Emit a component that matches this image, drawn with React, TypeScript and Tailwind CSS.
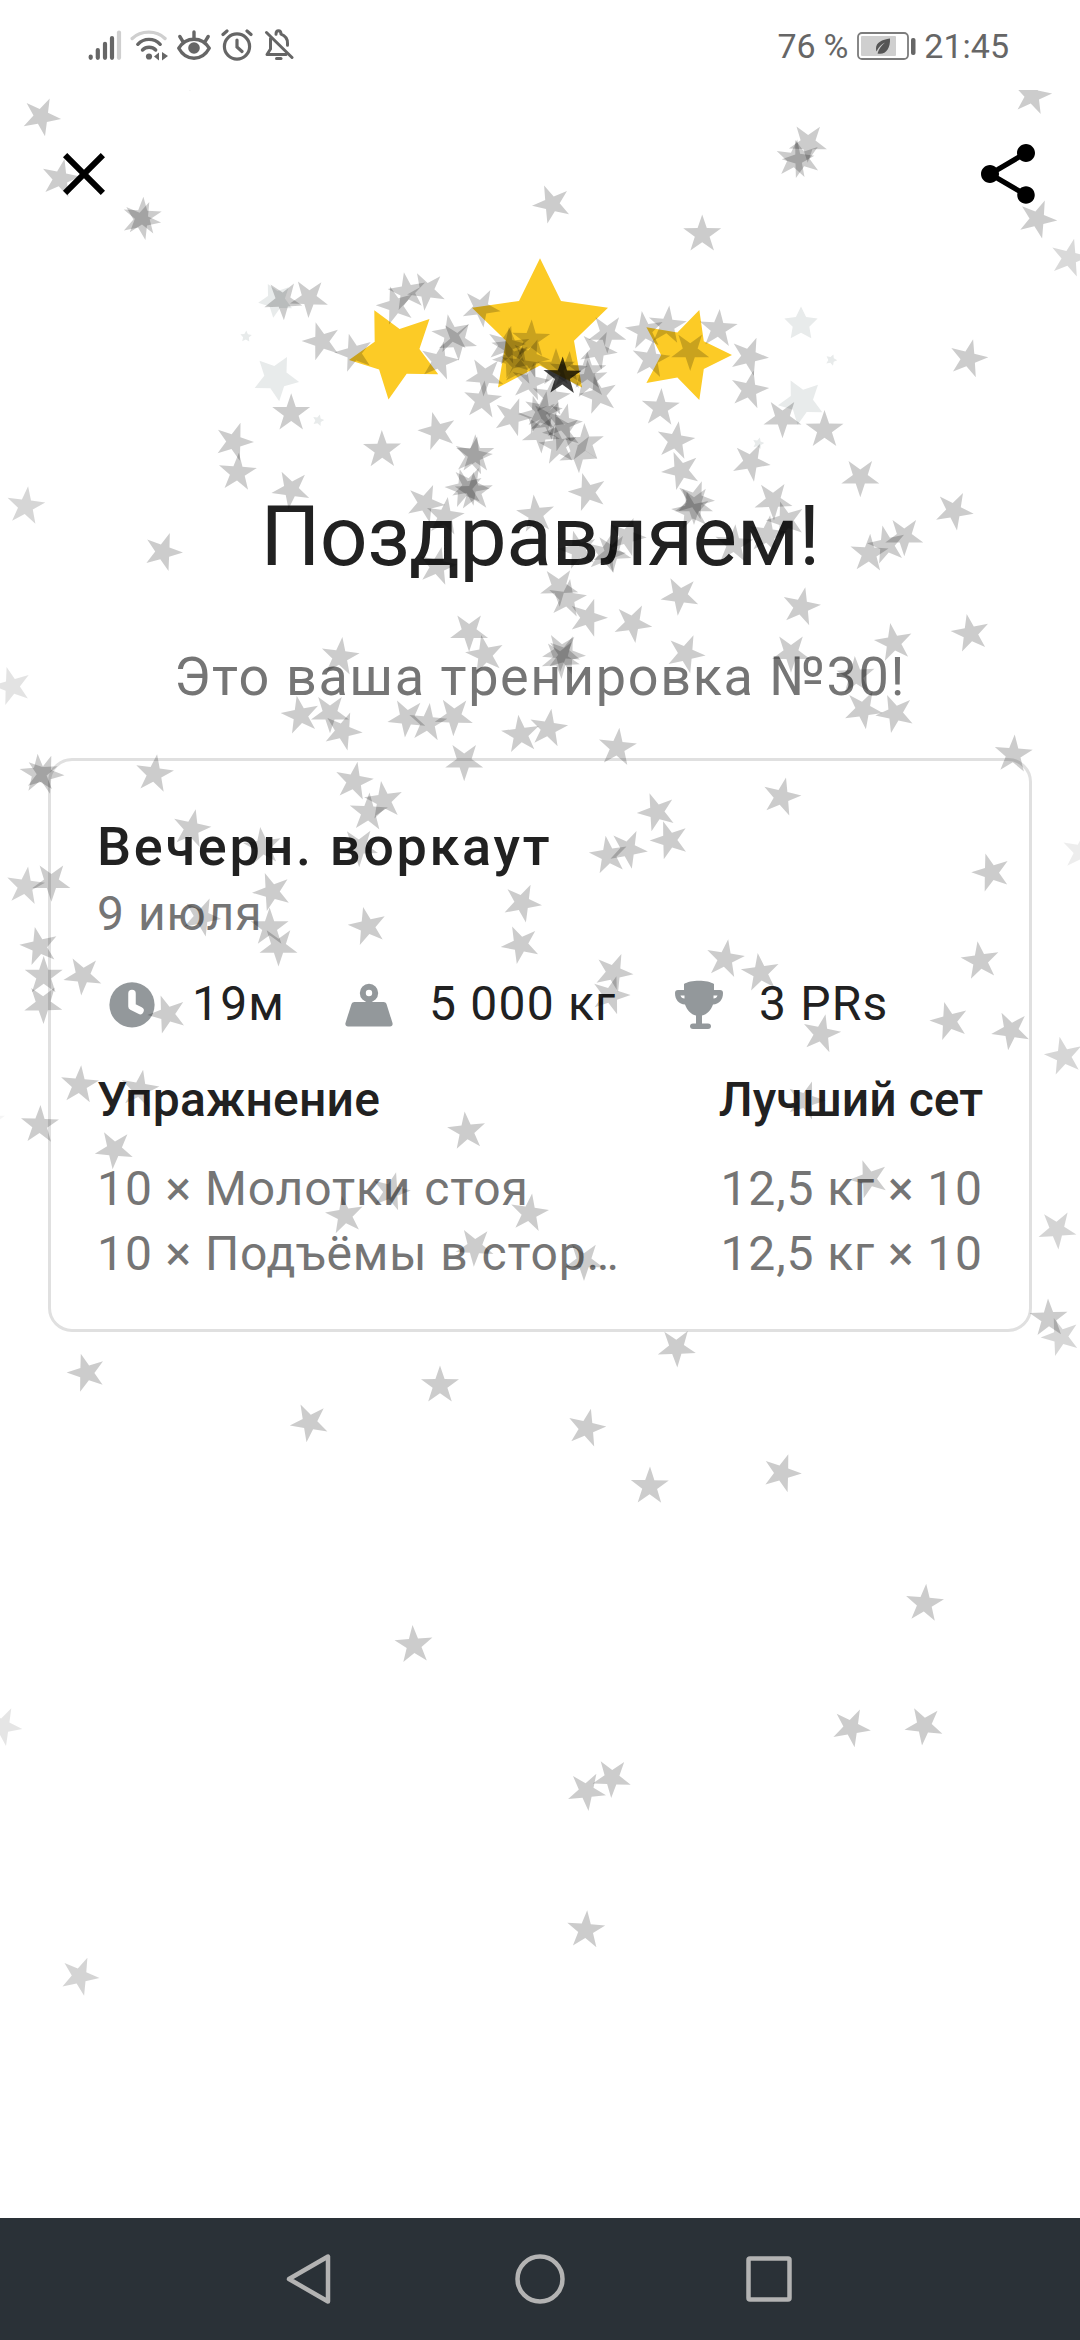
import React from 'react';
import { MdClose, MdShare } from 'react-icons/md';

// x, y, rotation in degrees, opacity (0.2 when left out)
type Particle = [number, number, number, number?];

const particles: Particle[] = [
  // top
  [190, 71, 36], [41.2, 116.6, 25], [60.3, 178.7, 12], [142.4, 216.8, 3], [141.2, 220.4, 24],
  [1032.2, 95.8, 11], [808, 142.8, 37], [794.8, 159.5, 7], [801.7, 158.9, -19], [551.9, 204, -23],
  [702.2, 234.4, 0], [1037.3, 219.1, 22], [1069.3, 258.1, 14, 0.15], [968.3, 358.7, 14],
  // left of the hero stars
  [283, 300.3, 33.5], [309.1, 298, -34], [321.6, 341.3, -17.5], [354.1, 353.1, -15.5],
  [291.2, 413.3, 0], [234, 441.7, 19], [237.5, 472.8, 4], [291.1, 489.3, -28.5], [382.1, 449.9, -1],
  [437.4, 431.2, -15], [475.3, 454.3, 0], [473, 456, 12], [470, 486, 26], [464.5, 488.5, -14],
  [474, 492, -2], [425.3, 503.3, 23], [445, 516.7, 8], [437.3, 566.5, 12.5], [407.4, 291.9, -10],
  [426.7, 290.8, -29], [395.7, 305.7, -16.5], [480.9, 307.7, 28.5], [451.2, 334, -10],
  [457.7, 340.7, 33], [439.3, 361.1, 13],
  // centre burst
  [484.8, 376.4, -32], [482.5, 400.3, 6], [506, 345, 15], [531, 339.5, 2], [511, 347, -6],
  [512, 359, -20], [530, 358, 22], [520, 366, 8], [530, 382, 12], [512.5, 417, 20],
  [540.7, 433.5, 34], [543, 411, 10], [538, 415, -15], [549, 420, 28], [535.7, 514.5, -6],
  [598.7, 395.3, -14], [589, 380, -5], [598, 350, 26], [587.3, 371.5, 0], [556, 368, 0],
  [568.3, 371, 4], [551, 397, 8], [563, 423, 14], [562, 432, -20], [558.3, 446, -8],
  [578, 453.3, 33], [562.4, 376.6, 1, 0.75],
  // right of the hero stars
  [607.3, 333.5, 36], [644.6, 330.9, -8], [667.2, 325.5, 6], [718.3, 328.9, 4], [749, 356.3, 22],
  [749.3, 390, 12], [650.7, 359.3, 8], [690.2, 351, 36], [782.5, 418.3, 36], [824.5, 429.9, 0],
  [660.5, 408, 3], [675.5, 440.9, 9.6], [681, 470.6, -22], [750.9, 461.9, 27], [860.3, 477.3, 36],
  [585, 443, -2], [587.7, 492.3, -16], [695, 500, 20], [691, 511, -12], [694, 505, 36],
  [773.3, 500.6, 34], [785.9, 520.5, -17], [767.3, 535, 8], [734, 544.3, 4], [869.2, 553.7, 3],
  [886.9, 545, -13], [904.3, 536.3, 36], [953.9, 510.7, 27], [626.7, 536.7, 20],
  [606, 554.3, 14], [612, 552.7, 33], [578.3, 550, -15],
  // around the headline texts
  [801.1, 606.9, 12], [791, 652.7, 36], [893.7, 642.8, -10], [855.8, 676, -3], [970.5, 633.5, -11],
  [863.1, 709.5, 28], [895.2, 713.4, -24], [1013.3, 754.5, 4], [559, 586.8, 34], [567.3, 598.7, 8],
  [588, 617.7, 18], [632.6, 623.3, 28], [680.1, 595.8, -29], [469.1, 631.7, 36], [485, 654.7, -11],
  [685.7, 653.7, 23], [561.5, 652, -32], [566, 655, 20], [560.5, 659, 33], [407, 717.7, -30],
  [427.7, 723, 6], [454, 716.3, -34], [520.7, 734.6, -7], [548.4, 728.5, 8.5], [617.3, 747.7, 6],
  [464.2, 761.3, 36], [25.7, 506.2, 7, 0.16], [163, 551.9, 20], [12.1, 686.3, -16, 0.11],
  [340, 657, 7], [300.5, 715.4, -11], [330, 713.3, 36], [342.7, 731, 22],
  // over the card
  [781.5, 797.1, 13], [991.2, 872.6, -17], [1081.3, 851.7, 9, 0.07], [154.3, 774, 8], [39, 773.7, -4],
  [44.5, 774.5, 20], [191.5, 828.8, 12], [262.6, 846.8, -7], [354, 781.5, 10], [383.8, 800.7, -8],
  [368.5, 812.6, 3], [358.9, 847.2, 35], [25.3, 886.3, 8, 0.18], [51.4, 881.8, 36], [272, 891.8, -21],
  [201.5, 916.8, 24], [269.6, 927.5, 0], [278.5, 946.5, 36], [367.6, 926.5, -13], [522.1, 902.8, 25],
  [520.6, 944.5, -25], [39.3, 946.5, -13], [43.7, 976, 0], [43.2, 1004, 35], [82.9, 975.6, -31],
  [167.4, 1014.2, -20], [79.5, 1085.1, 5], [139.6, 1089.4, 10], [39.8, 1125.1, 2], [-14, 1122, 0, 0.04],
  [114.3, 1149.3, -31], [466.7, 1131.4, -6], [390.9, 1191.6, 15], [344.8, 1215.5, -9],
  [529.3, 1213.4, 8], [474.8, 1246.7, -33], [656.7, 812, -21], [669.6, 840.2, -19],
  [608.7, 855.5, -9], [628, 849.1, 25], [725.1, 959.1, 9], [760.5, 972.8, -8], [980.3, 961, -8],
  [949.4, 1021.4, -15], [1010.9, 1030.4, -28], [1063.8, 1056.3, -12, 0.16], [613.6, 972.5, 23],
  [610.6, 995.3, 17], [821.3, 1033.9, 12], [805.8, 1100.5, 18], [869.2, 1179, -20], [584, 1261, 36],
  [1057, 1229.6, 32, 0.17], [1048.7, 1318.5, -2], [1060.6, 1336.7, -20, 0.16],
  // below the card
  [676.6, 1347.6, 34], [86.6, 1372.8, -17], [309.6, 1422.4, -27], [440, 1385.4, 0],
  [586.4, 1428.2, 13], [649.7, 1486.4, 1], [781.8, 1473.1, 19], [924.5, 1603.7, 5],
  [413.9, 1645.1, -4], [2.5, 1726.3, 26, 0.1], [851.1, 1727.6, 26], [924.1, 1725.6, -30],
  [586.4, 1791, 30], [611.9, 1777.9, -34], [585.8, 1930.2, 4], [79.6, 1976.2, 23, 0.17],
];

const starPoints = (cx: number, cy: number, r: number, rot: number, inner: number): string =>
  Array.from({ length: 10 }, (_, i) => {
    const radius = i % 2 === 0 ? r : r * inner;
    const angle = ((rot + i * 36) * Math.PI) / 180;
    return `${(cx + radius * Math.sin(angle)).toFixed(1)},${(cy - radius * Math.cos(angle)).toFixed(1)}`;
  }).join(' ');

const Confetti: React.FC = () => (
  <svg className="absolute left-0 top-[90px] pointer-events-none" width="1080" height="2128" viewBox="0 90 1080 2128">
    {particles.map(([x, y, rot, opacity = 0.2], i) => (
      <polygon key={i} points={starPoints(x, y, 20, rot, 0.39)} fill="#000" fillOpacity={opacity} />
    ))}
  </svg>
);

const HeroStars: React.FC = () => (
  <svg width="1080" height="278" viewBox="0 210 1080 278">
    <g fill="#e8ebeb">
      <polygon points={starPoints(276, 300, 18, -27, 0.5)} />
      <polygon points={starPoints(246, 336.5, 6, 3, 0.5)} />
      <polygon points={starPoints(275.9, 377.8, 23.6, 28, 0.5)} />
      <polygon points={starPoints(318.3, 420.3, 6, 15, 0.5)} />
      <polygon points={starPoints(801, 324, 17.5, 0, 0.5)} />
      <polygon points={starPoints(831.3, 360, 6, 20, 0.5)} />
      <polygon points={starPoints(801.3, 401.5, 23.6, -27, 0.5)} />
      <polygon points={starPoints(758.3, 443.3, 6, 15, 0.5)} />
    </g>
    <g fill="#fccb26">
      <polygon points={starPoints(395.9, 352.6, 47.5, -27, 0.5)} />
      <polygon points={starPoints(540, 329.8, 71.5, 0, 0.5)} />
      <polygon points={starPoints(684.7, 355.1, 47.3, 18, 0.5)} />
    </g>
  </svg>
);

const StatusBar: React.FC = () => (
  <div className="h-[90px] pl-[88px] pr-[71px] flex items-center justify-between text-[#666666]">
    <div className="flex items-center">
      <svg width="34" height="32" viewBox="0 0 34 32" fill="none" stroke="currentColor" strokeWidth="4.2" strokeLinecap="round">
        <path d="M2.7 28.8v-1.2M9.8 28.8V21M17 28.8v-14M24 28.8V9" />
        <path d="M31 28.8V3.6" stroke="#cfcfcf" />
      </svg>
      <svg className="ml-2" width="38" height="32" viewBox="0 0 38 32" fill="none" stroke="currentColor" strokeWidth="3.4" strokeLinecap="round">
        <path d="M2.2 9.5C11 1 26.5 1 35 9.5" stroke="#cfcfcf" />
        <path d="M7.8 15.3c6-6.6 16.2-6.6 22.4 0" />
        <path d="M12.5 21c3.6-3.7 9.6-3.7 13.2 0" />
        <circle cx="19" cy="27.5" r="3.1" fill="currentColor" stroke="none" />
        <path d="M24 27.5l5-4v8zM32 23v8.5l6-4.5z" fill="currentColor" stroke="none" />
      </svg>
      <svg className="ml-[9px]" width="34" height="32" viewBox="0 0 34 32" fill="none" stroke="currentColor" strokeWidth="3.4" strokeLinecap="round">
        <path d="M1.8 19.2C9 7.2 25 7.2 32.2 19.2C25 32.5 9 32.5 1.8 19.2z" strokeLinejoin="round" />
        <circle cx="17" cy="19" r="5.8" fill="currentColor" stroke="none" />
        <path d="M17 3v6M2.8 7.5l3 4.8M31.2 7.5l-3 4.8" />
      </svg>
      <svg className="ml-[10px]" width="32" height="32" viewBox="0 0 32 32" fill="none" stroke="currentColor" strokeWidth="3.2" strokeLinecap="round">
        <circle cx="16" cy="17.5" r="12.6" />
        <path d="M16 11v7l5 4.5M2 5.5l4-3.5M30 5.5L26 2" />
      </svg>
      <svg className="ml-[11px]" width="30" height="32" viewBox="0 0 30 32" fill="none" stroke="currentColor" strokeWidth="3" strokeLinecap="round" strokeLinejoin="round">
        <path d="M2.5 3.5l25.5 25" />
        <path d="M6.5 9.5v10.5l-3.5 5.5h19" />
        <path d="M12 5.2c0-4.5 5-4.5 5 0 4 1.5 6.5 5 6.5 9v2" />
        <path d="M12.5 29.5h4.5" />
      </svg>
    </div>
    <div className="pt-0.5 flex items-center text-[34px] leading-[40px]">
      <span className="tracking-[-0.2px]">76 %</span>
      <svg className="ml-[9px] mr-2" width="59" height="30" viewBox="0 0 59 30">
        <rect x="1" y="2" width="50" height="26" rx="4" fill="none" stroke="#7c7c7c" strokeWidth="1.8" />
        <rect x="4" y="5" width="35" height="20" rx="1" fill="#cfcfcf" />
        <path d="M33 7.5c-8 1-14 4-14 10 0 2 .5 3 .5 3 2-4.5 5-7 8.5-9-3.5 3-6 6-7.5 11 8 2 13-5 12.5-15z" fill="#555" />
        <rect x="54" y="7" width="4.5" height="17" rx="2" fill="#666" />
      </svg>
      <span>21:45</span>
    </div>
  </div>
);

const ClockIcon: React.FC = () => (
  <svg width="72" height="72" viewBox="0 0 72 72">
    <circle cx="36" cy="36.8" r="22.6" fill="#93989b" />
    <path d="M36 25.5v13l8 4" fill="none" stroke="#fff" strokeWidth="7.5" strokeLinecap="round" strokeLinejoin="round" />
  </svg>
);

const WeightIcon: React.FC = () => (
  <svg width="72" height="72" viewBox="0 0 72 72">
    <circle cx="36" cy="25" r="6.2" fill="none" stroke="#93989b" strokeWidth="6" />
    <path d="M21.5 34h29c1.5 0 2.5.8 3 2l6 19c.5 2-.5 3.5-2.5 3.5H15c-2 0-3-1.5-2.5-3.5l6-19c.5-1.2 1.5-2 3-2z" fill="#93989b" />
  </svg>
);

const TrophyIcon: React.FC = () => (
  <svg width="72" height="72" viewBox="0 0 72 72" fill="#93989b">
    <path d="M21 16c6-4.5 24-4.5 30 0v6h6c2 0 3 1 3 3 0 7-4 11-10 11.5-2 5.5-6 10-11 11v8h6c4 0 4 5.5 0 5.5H30c-4 0-4-5.5 0-5.5h3v-8c-5-1-9-5.5-11-11-6-.5-10-4.5-10-11.5 0-2 1-3 3-3h6z" />
    <path d="M17.5 27.5h4v3c-2 0-3.5-1-4-3zM54.5 27.5h-4v3c2 0 3.5-1 4-3z" fill="#fff" />
  </svg>
);

const exercises = [
  { name: '10 × Молотки стоя', best: '12,5 кг × 10' },
  { name: '10 × Подъёмы в стор…', best: '12,5 кг × 10' },
];

const WorkoutCard: React.FC = () => (
  <div className="mx-12 mt-[49px] h-[574px] rounded-3xl border-[3px] border-[#e0e0e0] px-[46px] pt-[54px] text-5xl leading-[56px] text-[#212121]">
    <h2 className="text-[54px] leading-[64px] font-medium tracking-[2.7px]">Вечерн. воркаут</h2>
    <p className="mt-[7px] text-[#757575] leading-[56px] tracking-[1px]">9 июля</p>

    <div className="mt-[34px] h-14 -ml-px flex items-center leading-[56px] tracking-[1.2px] whitespace-nowrap">
      <div className="w-[237px] flex items-center gap-6">
        <ClockIcon />
        <span>19м</span>
      </div>
      <div className="w-[330px] flex items-center gap-6">
        <WeightIcon />
        <span>5 000 кг</span>
      </div>
      <div className="flex items-center gap-6">
        <TrophyIcon />
        <span>3 PRs</span>
      </div>
    </div>

    <div className="mt-10 flex justify-between font-medium leading-[56px]">
      <span className="tracking-[0.2px]">Упражнение</span>
      <span>Лучший сет</span>
    </div>

    <div className="mt-[33px] space-y-[9px] text-[#757575] tracking-[0.9px] leading-[56px]">
      {exercises.map((exercise) => (
        <div key={exercise.name} className="flex justify-between">
          <span>{exercise.name}</span>
          <span>{exercise.best}</span>
        </div>
      ))}
    </div>
  </div>
);

const NavBar: React.FC = () => (
  <div className="h-[122px] bg-[#2a3137] flex items-center justify-center gap-[169px]">
    <svg width="60" height="60" viewBox="0 0 60 60" fill="none" stroke="#b3b3b3" strokeWidth="4.5" strokeLinejoin="round">
      <path d="M47 7.5v45L8 30z" />
    </svg>
    <svg width="60" height="60" viewBox="0 0 60 60" fill="none" stroke="#b3b3b3" strokeWidth="4.5">
      <circle cx="30" cy="30" r="22.5" />
    </svg>
    <svg width="60" height="60" viewBox="0 0 60 60" fill="none" stroke="#b3b3b3" strokeWidth="4.5">
      <rect x="9.5" y="9.5" width="41" height="41" rx="1.5" />
    </svg>
  </div>
);

export default function App() {
  return (
    <div className="relative w-[1080px] h-[2340px] overflow-hidden bg-white font-['Roboto',sans-serif] flex flex-col">
      <StatusBar />

      <div className="pt-12 pl-12 pr-9 flex justify-between text-black">
        <MdClose size={72} />
        <MdShare size={72} />
      </div>

      <HeroStars />

      <h1 className="mt-px text-center text-[84px] leading-[96px] tracking-[-0.5px] text-[#212121]">Поздравляем!</h1>
      <p className="mt-[60px] text-center text-[54px] leading-[64px] tracking-[1.6px] text-[#757575]">
        Это ваша тренировка №30!
      </p>

      <WorkoutCard />

      <div className="mt-auto">
        <NavBar />
      </div>

      <Confetti />
    </div>
  );
}
